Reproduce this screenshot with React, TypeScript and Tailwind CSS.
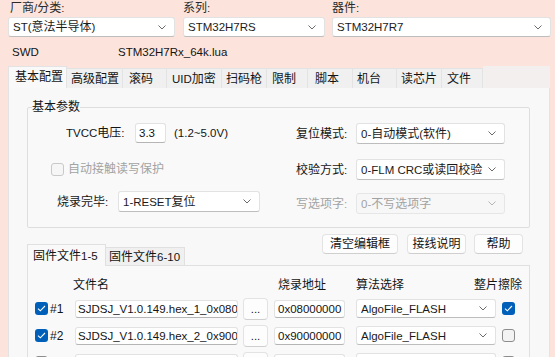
import React from "react";

function t(s: string): React.ReactNode {
  const parts = s.split(/([\u3000-\u9fff\uff00-\uffef]+)/);
  return parts.map((p, i) =>
    /[\u3000-\u9fff\uff00-\uffef]/.test(p) ? (
      <span key={i} className="text-[12px]">
        {p}
      </span>
    ) : (
      p
    )
  );
}

function Chevron({ color = "#6b6b6b" }: { color?: string }) {
  return (
    <svg width="8" height="5" viewBox="0 0 8 5" className="shrink-0">
      <path d="M0.5 0.5L4 4L7.5 0.5" fill="none" stroke={color} strokeWidth="1" />
    </svg>
  );
}

function Combo({
  text,
  className = "",
  disabled = false,
}: {
  text: string;
  className?: string;
  disabled?: boolean;
}) {
  return (
    <div
      className={
        "flex items-center rounded-[3px] border pl-[4px] pr-[8px] " +
        (disabled
          ? "border-[#e6e6e6] bg-[#f7f7f7] text-[#a2a2a2] "
          : "border-[#e2e2e2] border-b-[#bdbdbd] bg-white text-[#1b1b1b] ") +
        className
      }
    >
      <span className="min-w-0 flex-1 overflow-hidden whitespace-nowrap">{t(text)}</span>
      <Chevron color={disabled ? "#b5b5b5" : "#6b6b6b"} />
    </div>
  );
}

function Input({ text, className = "" }: { text: string; className?: string }) {
  return (
    <div
      className={
        "flex items-center overflow-hidden rounded-[3px] border border-[#e2e2e2] border-b-[#b5b5b5] bg-white pl-[2px] " +
        className
      }
    >
      <span className="block min-w-0 flex-1 overflow-hidden whitespace-nowrap">{t(text)}</span>
    </div>
  );
}

function Check({ on, className = "" }: { on: boolean; className?: string }) {
  return on ? (
    <div
      className={
        "flex h-[13px] w-[13px] shrink-0 items-center justify-center rounded-[3px] bg-[#005fb8] " + className
      }
    >
      <svg width="9" height="7" viewBox="0 0 9 7">
        <path d="M1 3.6L3.3 5.8L8 1" fill="none" stroke="white" strokeWidth="1.1" />
      </svg>
    </div>
  ) : (
    <div
      className={
        "h-[13px] w-[13px] shrink-0 rounded-[3px] border border-[#8d8d8d] bg-[#f3f3f3] " + className
      }
    />
  );
}

function Btn({ text, className = "" }: { text: string; className?: string }) {
  return (
    <div
      className={
        "flex items-center justify-center rounded-[4px] border border-[#e3e3e3] border-b-[#cfcfcf] bg-[#fdfdfd] " +
        className
      }
    >
      {t(text)}
    </div>
  );
}

const tabs: [string, number, number][] = [
  ["基本配置", 59, 6],
  ["高级配置", 56, 4],
  ["滚码", 44, 6],
  ["UID加密", 55, 5],
  ["扫码枪", 45, 4],
  ["限制", 41, 5],
  ["脚本", 45, 7],
  ["机台", 44, 4],
  ["读芯片", 45, 4],
  ["文件", 41, 5],
];

const rows = [
  { n: "#1", on: true, file: "SJDSJ_V1.0.149.hex_1_0x08000000", addr: "0x08000000", algo: "AlgoFile_FLASH", er: true },
  { n: "#2", on: true, file: "SJDSJ_V1.0.149.hex_2_0x90000000", addr: "0x90000000", algo: "AlgoFile_FLASH", er: false },
  { n: "#3", on: false, file: "", addr: "0x00000000", algo: "", er: false },
];

export default function App() {
  return (
    <div className="h-[357px] w-[555px] overflow-hidden bg-[#fce4dc] font-['Liberation_Sans','Noto_Sans_CJK_SC',sans-serif] text-[11.5px] leading-[16px] text-[#141414]">
      {/* top labels */}
      <div className="flex h-[16px] text-[#2a2a2a]">
        <div className="ml-[10px] w-[173px]">{t("厂商/分类:")}</div>
        <div className="w-[149px]">{t("系列:")}</div>
        <div>{t("器件:")}</div>
      </div>
      <div className="mt-[1px] flex">
        <Combo text="ST(意法半导体)" className="ml-[8px] h-[20px] w-[167px]" />
        <Combo text="STM32H7RS" className="ml-[8px] h-[20px] w-[142px]" />
        <Combo text="STM32H7R7" className="ml-[7px] h-[20px] w-[219px]" />
      </div>
      <div className="mt-[7px] flex h-[16px]">
        <div className="ml-[12px] w-[106px]">SWD</div>
        <div>STM32H7Rx_64k.lua</div>
      </div>

      {/* main tab widget */}
      <div className="ml-[8px] mt-[6px] w-[542px]">
        <div className="flex h-[22px] items-start">
          {tabs.map(([s, w, pl], i) =>
            i === 0 ? (
              <div
                key={s}
                style={{ width: w, paddingLeft: pl }}
                className="relative z-10 h-[22px] border border-b-0 border-[#e3e3e3] bg-[#f9f9f9] pt-[2px]"
              >
                {t(s)}
              </div>
            ) : (
              <div
                key={s}
                style={{ width: w, paddingLeft: pl }}
                className="mt-[2px] h-[20px] border border-b-0 border-l-0 border-[#e3e3e3] bg-[#f0f0f0] pt-[2px]"
              >
                {t(s)}
              </div>
            )
          )}
          <div className="h-[22px] flex-1 bg-[#f3efee]" />
        </div>
        <div className="-mt-[1px] h-[280px] border border-[#e3e3e3] bg-[#f9f8f8]">
          {/* group box */}
          <fieldset className="ml-[18px] mt-[11px] h-[129px] w-[503px] rounded-[2px] border border-[#dedede] bg-[#f9f9f9]">
            <legend className="ml-[4px] px-0 leading-[16px]">{t("基本参数")}</legend>
            <div className="flex">
              {/* left column */}
              <div className="w-[268px]">
                <div className="mt-[8px] flex h-[20px] items-center">
                  <span className="ml-[38px] w-[69px]">{t("TVCC电压:")}</span>
                  <Input text="3.3" className="h-[20px] w-[31px] pl-[3px]" />
                  <span className="ml-[8px]">(1.2~5.0V)</span>
                </div>
                <div className="mt-[18px] flex h-[16px] items-center text-[#a3a3a3]">
                  <div className="ml-[23px] h-[13px] w-[13px] rounded-[3px] border border-[#c9c9c9] bg-[#f6f6f6]" />
                  <span className="ml-[4px]">{t("自动接触读写保护")}</span>
                </div>
                <div className="mt-[14px] flex h-[21px] items-center">
                  <span className="ml-[29px] w-[61px]">{t("烧录完毕:")}</span>
                  <Combo text="1-RESET复位" className="h-[21px] w-[142px]" />
                </div>
              </div>
              {/* right column */}
              <div>
                <div className="mt-[8px] flex h-[21px] items-center">
                  <span className="w-[60px]">{t("复位模式:")}</span>
                  <Combo text="0-自动模式(软件)" className="h-[21px] w-[149px]" />
                </div>
                <div className="mt-[15px] flex h-[21px] items-center">
                  <span className="w-[60px]">{t("校验方式:")}</span>
                  <Combo text="0-FLM CRC或读回校验" className="h-[21px] w-[149px]" />
                </div>
                <div className="mt-[13px] flex h-[21px] items-center">
                  <span className="w-[60px] text-[#a3a3a3]">{t("写选项字:")}</span>
                  <Combo text="0-不写选项字" disabled className="h-[21px] w-[149px]" />
                </div>
              </div>
            </div>
          </fieldset>

          {/* buttons + inner tabs */}
          <div className="mt-[6px] flex h-[31px]">
            <div className="ml-[18px] flex items-end">
              <div className="relative z-10 -mb-[1px] h-[22px] w-[79px] border border-b-0 border-[#e0e0e0] bg-[#f9f9f9] pl-[5px] pt-[3px]">
                {t("固件文件1-5")}
              </div>
              <div className="h-[18px] w-[79px] border border-b-0 border-l-0 border-[#e0e0e0] bg-[#f0f0f0] pl-[3px] pt-[1px]">
                {t("固件文件6-10")}
              </div>
            </div>
            <div className="ml-auto mr-[26px] flex gap-[8px]">
              <Btn text="清空编辑框" className="h-[20px] w-[76px]" />
              <Btn text="接线说明" className="ml-[1px] h-[20px] w-[59px]" />
              <Btn text="帮助" className="h-[20px] w-[49px]" />
            </div>
          </div>
          <div className="ml-[18px] h-[120px] w-[503px] border border-[#e0e0e0] bg-[#f9f9f9]">
            <div className="mt-[11px] flex h-[16px]">
              <span className="ml-[45px] w-[205px]">{t("文件名")}</span>
              <span className="w-[78px]">{t("烧录地址")}</span>
              <span className="w-[118px]">{t("算法选择")}</span>
              <span>{t("整片擦除")}</span>
            </div>
            <div className="mt-[2px]">
              {rows.map((r) => (
                <div key={r.n} className="flex h-[27px] items-center">
                  <Check on={r.on} className="ml-[7px]" />
                  <span className="ml-[2px] w-[25px] text-[12px]">{r.n}</span>
                  <Input text={r.file} className="h-[18px] w-[163px]" />
                  <Btn text="..." className="ml-[5px] h-[22px] w-[25px] leading-[12px]" />
                  <Input text={r.addr} className="ml-[6px] h-[18px] w-[71px] pl-[3px]" />
                  {r.algo ? (
                    <Combo text={r.algo} className="ml-[11px] h-[19px] w-[140px] pl-[2px]" />
                  ) : (
                    <Input text="" className="ml-[11px] h-[19px] w-[140px]" />
                  )}
                  <Check on={r.er} className="ml-[6px]" />
                </div>
              ))}
            </div>
          </div>
        </div>
      </div>
    </div>
  );
}
